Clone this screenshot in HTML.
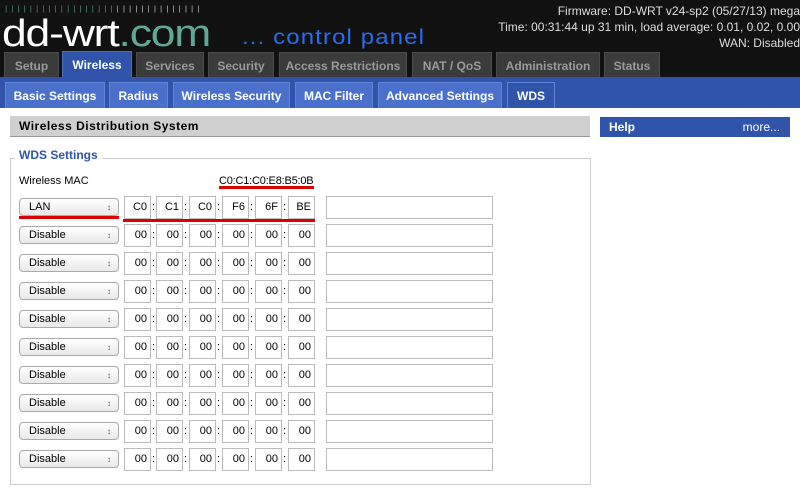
<!DOCTYPE html>
<html><head><meta charset="utf-8"><style>
*{margin:0;padding:0;box-sizing:border-box}
body{width:800px;height:493px;overflow:hidden;background:#fff;font-family:"Liberation Sans",sans-serif;position:relative}
.a{position:absolute}
#hdr{left:0;top:0;width:800px;height:77px;background:#111}
.tab{position:absolute;top:52px;height:25px;background:#3b3b3b;color:#9a9a9a;font-weight:bold;font-size:12px;text-align:center;line-height:26px;border:1px solid #4a4a4a;border-bottom:none}
#bar{left:0;top:77px;width:800px;height:31px;background:#2f54a9}
.sub{position:absolute;top:82px;height:26px;background:#4a70cc;color:#fff;font-weight:bold;font-size:12px;text-align:center;line-height:27px;border:1px solid #5f83d6;border-bottom:none}
.inp{position:absolute;height:23px;width:27px;border:1px solid #bbb;font-size:11px;text-align:right;padding-right:3px;line-height:21px;color:#000}
.col{position:absolute;font-size:11px;line-height:23px}
.sel{position:absolute;left:19px;width:100px;height:18px;border:1px solid #aaa;border-radius:4px;background:linear-gradient(#fff,#e9e9e9);font-size:11px;line-height:17px;padding-left:9px}
.sel:after{content:"\2195";position:absolute;right:7px;top:0;font-size:8px;color:#555}
.big{position:absolute;left:326px;width:167px;height:23px;border:1px solid #bbb}
.red{position:absolute;height:3px;background:#d00}
</style></head><body>
<div id="hdr" class="a"></div>
<div class="a" style="left:4px;top:6px;font-size:7px;letter-spacing:2px;color:#5fa896;font-family:'Liberation Mono',monospace">||||||||||||||||||<span style="color:#ddd">||||||||||||||</span></div>
<div class="a" style="left:2px;top:14px;font-size:38px;color:#fff;letter-spacing:-1px;line-height:40px;transform:scaleX(1.17);transform-origin:0 0">dd-wrt<span style="color:#5fa896">.com</span></div>
<div class="a" style="left:242px;top:26px;font-size:21px;color:#2a6cf0;letter-spacing:1px;line-height:24px;transform:scaleX(1.14);transform-origin:0 0">... control panel</div>
<div class="a" style="right:0;top:3px;color:#ddd;font-size:12px;text-align:right;line-height:16px;white-space:nowrap">Firmware: DD-WRT v24-sp2 (05/27/13) mega<br>Time: 00:31:44 up 31 min, load average: 0.01, 0.02, 0.00<br>WAN: Disabled</div>
<div class="tab" style="left:4px;width:55px">Setup</div>
<div class="tab" style="left:62px;width:70px;top:51px;height:27px;background:#2f54a9;color:#fff;border-color:#4a6fc0">Wireless</div>
<div class="tab" style="left:136px;width:68px">Services</div>
<div class="tab" style="left:208px;width:66px">Security</div>
<div class="tab" style="left:279px;width:128px">Access Restrictions</div>
<div class="tab" style="left:412px;width:80px">NAT / QoS</div>
<div class="tab" style="left:496px;width:104px">Administration</div>
<div class="tab" style="left:604px;width:56px">Status</div>
<div id="bar" class="a"></div>
<div class="sub" style="left:5px;width:100px">Basic Settings</div>
<div class="sub" style="left:109px;width:59px">Radius</div>
<div class="sub" style="left:173px;width:117px">Wireless Security</div>
<div class="sub" style="left:295px;width:78px">MAC Filter</div>
<div class="sub" style="left:378px;width:124px">Advanced Settings</div>
<div class="sub" style="left:507px;width:48px;background:#2f54a9">WDS</div>
<div class="a" style="left:10px;top:116px;width:580px;height:21px;background:#d0d0d0;border-bottom:1px solid #999;font-weight:bold;font-size:12px;line-height:21px;padding-left:9px;letter-spacing:.5px">Wireless Distribution System</div>
<div class="a" style="left:600px;top:117px;width:190px;height:20px;background:#2f54a9;color:#fff;font-weight:bold;font-size:12px;line-height:20px;padding-left:9px">Help<span style="position:absolute;right:10px;font-weight:normal">more...</span></div>
<div class="a" style="left:10px;top:158px;width:581px;height:327px;border:1px solid #ccc"></div>
<div class="a" style="left:15px;top:148px;background:#fff;padding:0 4px;color:#2f54a9;font-weight:bold;font-size:12px">WDS Settings</div>
<div class="a" style="left:19px;top:175px;font-size:11px">Wireless MAC</div>
<div class="a" style="left:219px;top:175px;font-size:11px;letter-spacing:-0.2px">C0:C1:C0:E8:B5:0B</div>
<div class="red" style="left:219px;top:186px;width:95px"></div>
<div class="red" style="left:19px;top:216px;width:100px"></div>
<div class="red" style="left:123px;top:219px;width:192px"></div>
<div id="rows"></div>
<script>
var xs=[124,156,189,222,255,288],h='';
for(var i=0;i<10;i++){var t=196+28*i;var v=i==0?['C0','C1','C0','F6','6F','BE']:['00','00','00','00','00','00'];
h+='<div class="sel" style="top:'+(t+2)+'px">'+(i==0?'LAN':'Disable')+'</div>';
for(var j=0;j<6;j++){h+='<div class="inp" style="left:'+xs[j]+'px;top:'+t+'px">'+v[j]+'</div>';if(j<5)h+='<div class="col" style="left:'+(xs[j]+28)+'px;top:'+t+'px">:</div>';}
h+='<div class="big" style="top:'+t+'px"></div>';}
document.getElementById('rows').innerHTML=h;
</script>
</body></html>
